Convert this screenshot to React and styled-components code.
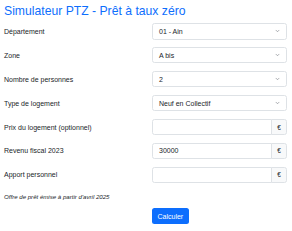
import styled, { createGlobalStyle } from 'styled-components'

const GlobalStyle = createGlobalStyle`
  * { box-sizing: border-box; }
  body {
    margin: 0;
    background: #fff;
    font-family: "Liberation Sans", Arial, sans-serif;
    color: #212529;
  }
`

const Page = styled.div`
  padding: 3px 5px 0 4px;
`

const Title = styled.h1`
  margin: 0 0 4px 0;
  font-size: 12.2px;
  font-weight: 400;
  line-height: 16px;
  color: #0d6efd;
`

const Form = styled.form`
  display: flex;
  flex-direction: column;
  gap: 7.45px;
`

const Row = styled.div`
  display: grid;
  grid-template-columns: 1fr 135px;
  align-items: center;
  height: 16.5px;
`

const Label = styled.label`
  font-size: 7px;
  line-height: 1;
`

const Select = styled.div`
  height: 16.5px;
  display: flex;
  align-items: center;
  justify-content: space-between;
  padding: 0 6px 0 6px;
  border: 1px solid #dee2e6;
  border-radius: 2.5px;
  font-size: 7px;
`

const Chevron = () => (
  <svg width="5" height="4" viewBox="0 0 16 16">
    <path d="m2 5 6 6 6-6" fill="none" stroke="#5c636a" strokeWidth="2" strokeLinecap="round" strokeLinejoin="round" />
  </svg>
)

const InputGroup = styled.div`
  display: flex;
  height: 16.5px;
`

const Input = styled.div`
  flex: 1;
  display: flex;
  align-items: center;
  padding: 0 6px;
  border: 1px solid #dee2e6;
  border-radius: 2.5px 0 0 2.5px;
  font-size: 7px;
`

const Addon = styled.div`
  width: 16px;
  display: flex;
  align-items: center;
  justify-content: center;
  margin-left: -1px;
  border: 1px solid #dee2e6;
  border-radius: 0 2.5px 2.5px 0;
  background: #f8f9fa;
  font-size: 6.5px;
`

const Note = styled.p`
  margin: 10px 0 0 0;
  font-size: 6.1px;
  font-style: italic;
  line-height: 8px;
`

const Actions = styled.div`
  display: grid;
  grid-template-columns: 1fr 135px;
  margin-top: 7px;
`

const Button = styled.button`
  grid-column: 2;
  justify-self: start;
  height: 16px;
  padding: 0 5.5px;
  border: none;
  border-radius: 2.5px;
  background: #0d6efd;
  color: #fff;
  font-family: inherit;
  font-size: 7px;
`

const selects = [
  ['Département', '01 - Ain'],
  ['Zone', 'A bis'],
  ['Nombre de personnes', '2'],
  ['Type de logement', 'Neuf en Collectif'],
]

const inputs = [
  ['Prix du logement (optionnel)', ''],
  ['Revenu fiscal 2023', '30000'],
  ['Apport personnel', ''],
]

export default function App() {
  return (
    <Page>
      <GlobalStyle />
      <Title>Simulateur PTZ - Prêt à taux zéro</Title>
      <Form>
        {selects.map(([label, value]) => (
          <Row key={label}>
            <Label>{label}</Label>
            <Select>
              <span>{value}</span>
              <Chevron />
            </Select>
          </Row>
        ))}
        {inputs.map(([label, value]) => (
          <Row key={label}>
            <Label>{label}</Label>
            <InputGroup>
              <Input>{value}</Input>
              <Addon>€</Addon>
            </InputGroup>
          </Row>
        ))}
      </Form>
      <Note>Offre de prêt émise à partir d'avril 2025</Note>
      <Actions>
        <Button type="button">Calculer</Button>
      </Actions>
    </Page>
  )
}
